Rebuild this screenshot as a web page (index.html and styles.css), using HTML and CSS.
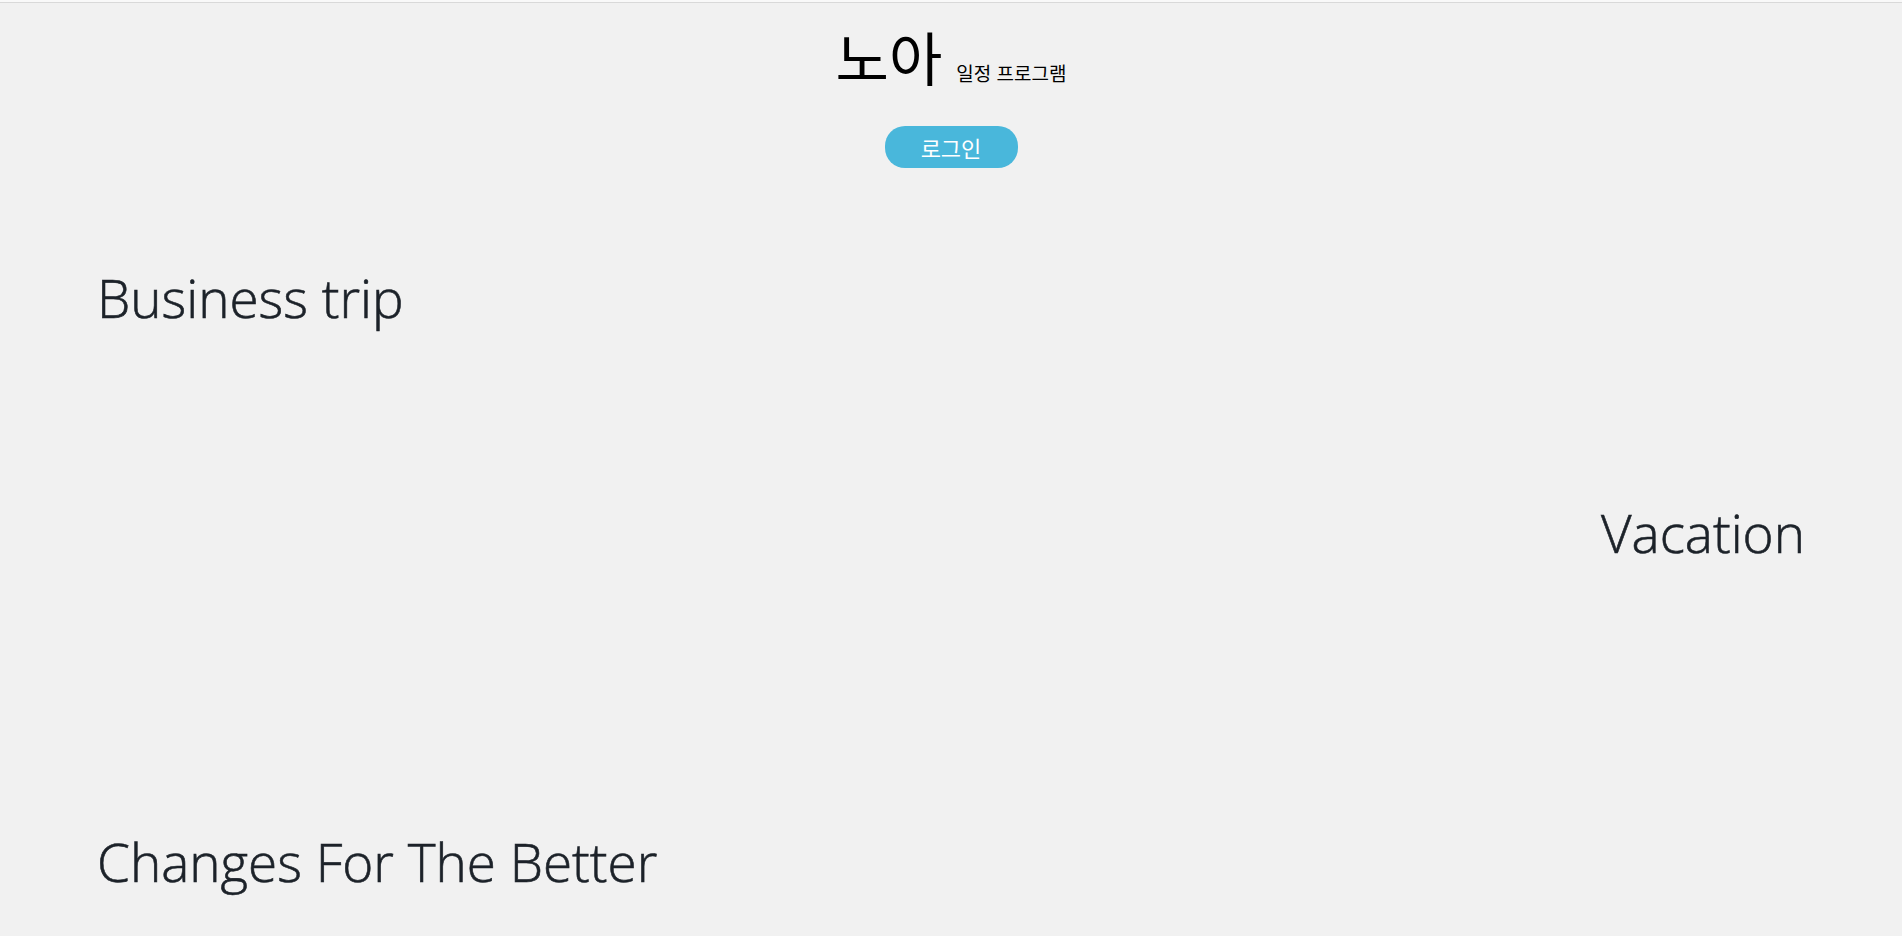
FILE: index.html
```html
<!DOCTYPE html>
<html lang="ko">
<head>
<meta charset="utf-8">
<title>노아 일정 프로그램</title>
<link rel="stylesheet" href="styles.css">
</head>
<body>
<div class="topline"></div>
<header class="header">
  <div class="brand">
    <span class="brand-name">노아</span>
    <span class="brand-sub">일정 프로그램</span>
  </div>
  <button class="login-btn" type="button">로그인</button>
</header>
<main class="main">
  <section class="feature feature-left feature-first">
    <h2 class="feature-title">Business trip</h2>
  </section>
  <section class="feature feature-right feature-second">
    <h2 class="feature-title">Vacation</h2>
  </section>
  <section class="feature feature-left feature-third">
    <h2 class="feature-title">Changes For The Better</h2>
  </section>
</main>
</body>
</html>
```

FILE: styles.css
```css
html, body {
  margin: 0;
  padding: 0;
}
body {
  background: #f1f1f1;
  font-family: "Open Sans", "Noto Sans CJK KR", sans-serif;
  color: #1c2229;
  height: 936px;
  overflow: hidden;
}
.topline {
  height: 2px;
  background: #f9f9f9;
  border-bottom: 1px solid #d9d9d9;
}
.header {
  display: flex;
  flex-direction: column;
  align-items: center;
}
.brand {
  margin-top: 20px;
  display: flex;
  align-items: baseline;
  gap: 14px;
  color: #000;
  font-family: "Noto Sans CJK KR", sans-serif;
}
.brand-name {
  font-size: 58px;
  line-height: 67px;
}
.brand-sub {
  font-size: 19px;
}
.login-btn {
  margin-top: 36px;
  width: 133px;
  height: 42px;
  border: none;
  border-radius: 20px;
  background: #49b7db;
  color: #fff;
  font-family: "Noto Sans CJK KR", sans-serif;
  font-size: 22px;
  padding: 0;
}
.main {
  padding: 0 97px;
}
.feature {
  display: flex;
}
.feature-right {
  justify-content: flex-end;
}
.feature-title {
  margin: 0;
  font-size: 53px;
  font-weight: 300;
  line-height: 67px;
  -webkit-text-stroke: 0.6px currentColor;
}
.feature-first { margin-top: 96px; }
.feature-second { margin-top: 168px; }
.feature-third { margin-top: 262px; }
```
